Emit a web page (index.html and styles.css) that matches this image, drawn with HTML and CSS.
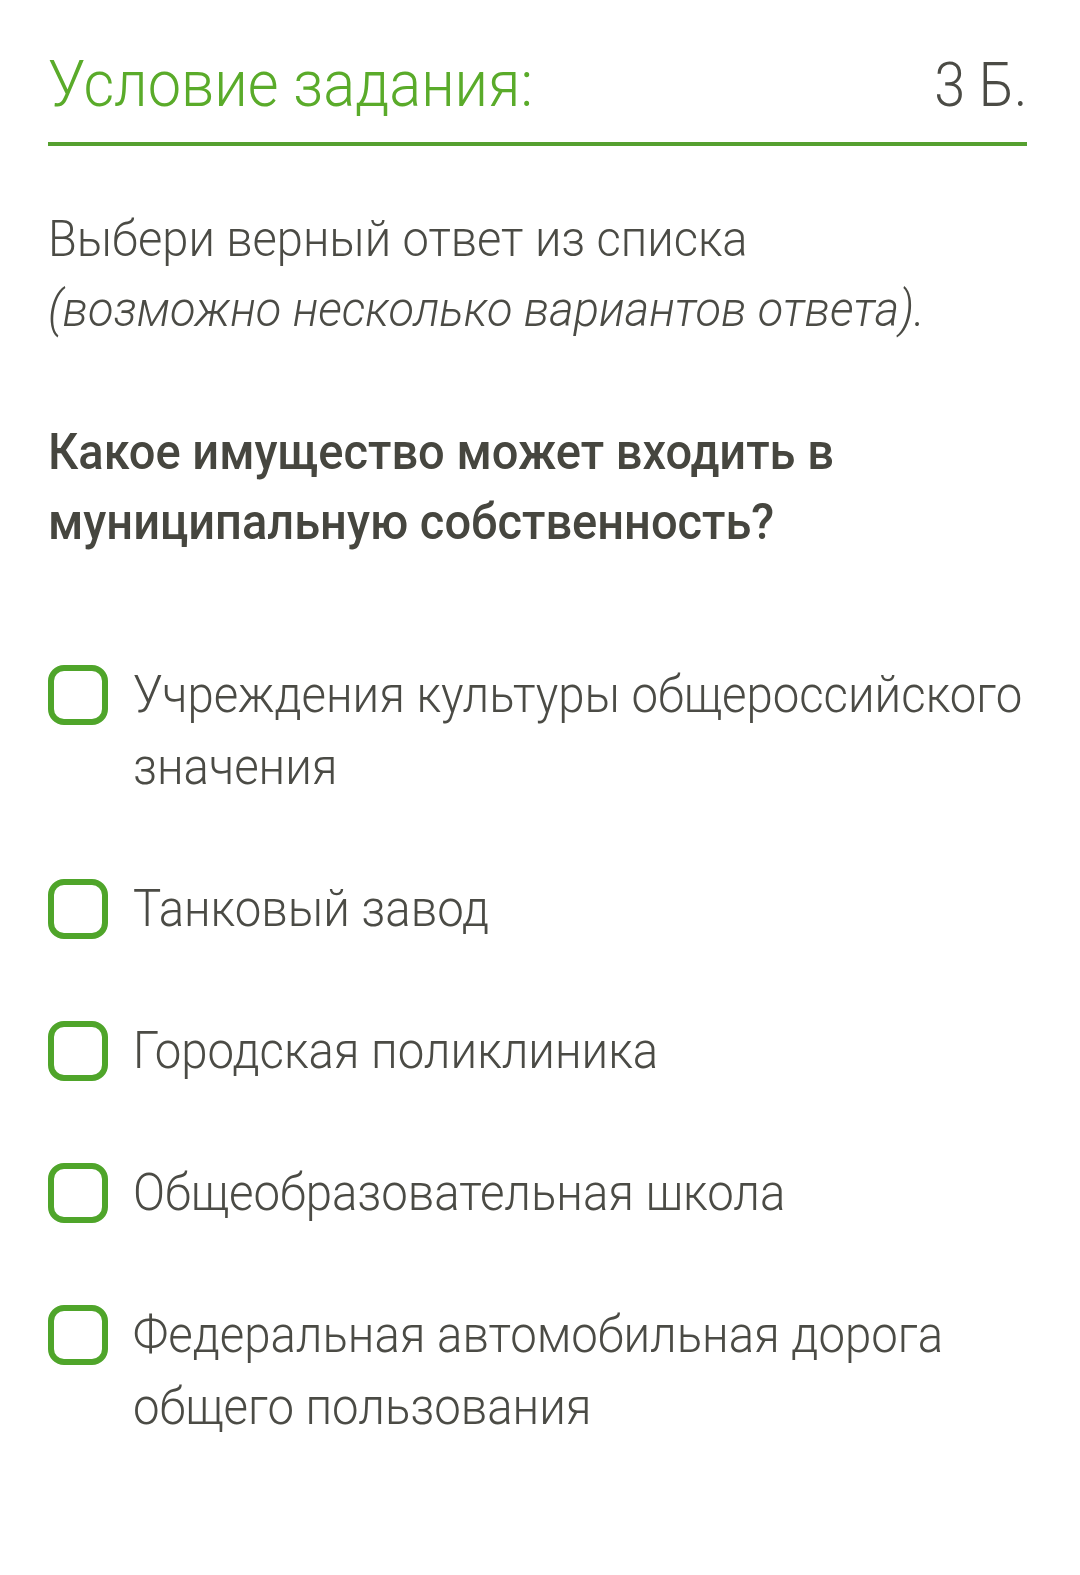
FILE: index.html
```html
<!DOCTYPE html>
<html lang="ru">
<head>
    <meta charset="UTF-8">
    <meta name="viewport" content="width=device-width, initial-scale=1.0">
    <title>Условие задания</title>
    <link rel="stylesheet" href="styles.css">
</head>
<body>
    <div class="task">
        <div class="task-header">
            <div class="task-title">Условие задания:</div>
            <div class="task-points">3 Б.</div>
        </div>

        <div class="task-hint cond">
            Выбери верный ответ из списка<br>
            <em>(возможно несколько вариантов ответа).</em>
        </div>

        <div class="task-question cond">Какое имущество может входить в муниципальную собственность?</div>

        <ul class="options">
            <li class="option">
                <span class="checkbox"></span>
                <span class="option-text">Учреждения культуры общероссийского значения</span>
            </li>
            <li class="option">
                <span class="checkbox"></span>
                <span class="option-text">Танковый завод</span>
            </li>
            <li class="option">
                <span class="checkbox"></span>
                <span class="option-text">Городская поликлиника</span>
            </li>
            <li class="option">
                <span class="checkbox"></span>
                <span class="option-text">Общеобразовательная школа</span>
            </li>
            <li class="option">
                <span class="checkbox"></span>
                <span class="option-text">Федеральная автомобильная дорога общего пользования</span>
            </li>
        </ul>
    </div>
</body>
</html>
```

FILE: styles.css
```css
body {
    margin: 0;
    padding: 0;
    background: #fff;
    font-family: 'Roboto', 'Liberation Sans', sans-serif;
    font-weight: 300;
    color: #4b4b45;
}

.task {
    padding: 0 53px 0 48px;
}

/* narrow the plain Roboto to look like the condensed cut */
.cond {
    width: calc(100% / 0.94);
    transform: scaleX(0.94);
    transform-origin: left center;
}

.task-header {
    display: flex;
    justify-content: space-between;
    align-items: baseline;
    padding-top: 45px;
    padding-bottom: 17px;
    border-bottom: 4px solid #55a02f;
}

.task-title {
    color: #5aab2a;
    font-size: 64px;
    line-height: 80px;
    transform: scaleX(0.93);
    transform-origin: left center;
}

.task-points {
    font-size: 62px;
    line-height: 80px;
    color: #4b4b45;
    transform: scaleX(0.9);
    transform-origin: right center;
}

.task-hint {
    margin-top: 58px;
    font-size: 50px;
    line-height: 70px;
}

.task-hint em {
    font-style: italic;
}

.task-question {
    margin-top: 73px;
    font-size: 50px;
    font-weight: 500;
    line-height: 70px;
    color: #46463f;
}

.options {
    list-style: none;
    margin: 102px 0 0;
    padding: 0;
    display: flex;
    flex-direction: column;
    gap: 70px;
}

.option {
    display: flex;
    align-items: flex-start;
}

.checkbox {
    flex: none;
    width: 48px;
    height: 48px;
    margin-top: 6px;
    border: 6px solid #4fa52a;
    border-radius: 16px;
}

.option-text {
    flex: none;
    width: calc((100% - 85px) / 0.91);
    margin-left: 25px;
    font-size: 52px;
    line-height: 72px;
    transform: scaleX(0.91);
    transform-origin: left center;
}
```
